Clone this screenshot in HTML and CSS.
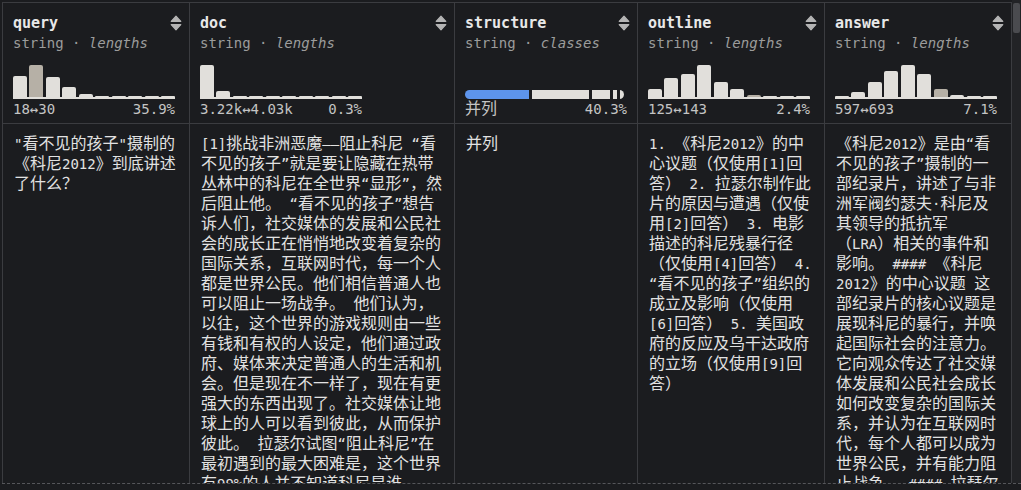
FILE: index.html
```html
<!DOCTYPE html>
<html lang="zh">
<head>
<meta charset="utf-8">
<link rel="stylesheet" href="styles.css">
</head>
<body>
<div class="viewer">
  <div class="main">
    <div class="head-row">
      <div class="hcell">
        <div class="title-row"><span class="title">query</span><svg class="sort" viewBox="0 0 12 16"><path d="M6 1.2 L10.8 6.3 H1.2 Z"/><path d="M6 14.8 L10.8 9.7 H1.2 Z"/></svg></div>
        <div class="sub">string · <em>lengths</em></div>
        <div class="hist">
          <div class="bar" style="height:21px"></div><div class="bar hi" style="height:32px"></div><div class="bar" style="height:20px"></div><div class="bar" style="height:10px"></div><div class="bar" style="height:3px"></div><div class="bar" style="height:1px"></div><div class="bar" style="height:1px"></div><div class="bar" style="height:1px"></div><div class="bar" style="height:1px"></div><div class="bar" style="height:1px"></div>
        </div>
        <div class="stats"><span>18↔30</span><span>35.9%</span></div>
      </div>
      <div class="hcell">
        <div class="title-row"><span class="title">doc</span><svg class="sort" viewBox="0 0 12 16"><path d="M6 1.2 L10.8 6.3 H1.2 Z"/><path d="M6 14.8 L10.8 9.7 H1.2 Z"/></svg></div>
        <div class="sub">string · <em>lengths</em></div>
        <div class="hist">
          <div class="bar" style="height:32px"></div><div class="bar" style="height:6px"></div><div class="bar" style="height:1px"></div><div class="bar" style="height:1px"></div><div class="bar" style="height:1px"></div><div class="bar" style="height:1px"></div><div class="bar" style="height:1px"></div><div class="bar" style="height:1px"></div><div class="bar" style="height:1px"></div><div class="bar" style="height:1px"></div>
        </div>
        <div class="stats"><span>3.22k↔4.03k</span><span>0.3%</span></div>
      </div>
      <div class="hcell">
        <div class="title-row"><span class="title">structure</span><svg class="sort" viewBox="0 0 12 16"><path d="M6 1.2 L10.8 6.3 H1.2 Z"/><path d="M6 14.8 L10.8 9.7 H1.2 Z"/></svg></div>
        <div class="sub">string · <em>classes</em></div>
        <div class="classes">
          <div class="cls">
            <div class="seg blue" style="width:64px"></div><div class="seg" style="width:57px"></div><div class="seg" style="width:18px"></div><div class="seg" style="width:4px"></div><div class="seg" style="width:4px"></div>
          </div>
        </div>
        <div class="stats"><span class="cj">并列</span><span>40.3%</span></div>
      </div>
      <div class="hcell">
        <div class="title-row"><span class="title">outline</span><svg class="sort" viewBox="0 0 12 16"><path d="M6 1.2 L10.8 6.3 H1.2 Z"/><path d="M6 14.8 L10.8 9.7 H1.2 Z"/></svg></div>
        <div class="sub">string · <em>lengths</em></div>
        <div class="hist">
          <div class="bar" style="height:8px"></div><div class="bar" style="height:19px"></div><div class="bar" style="height:23px"></div><div class="bar" style="height:32px"></div><div class="bar" style="height:15px"></div><div class="bar" style="height:8px"></div><div class="bar hi" style="height:2px"></div><div class="bar" style="height:1px"></div><div class="bar" style="height:1px"></div><div class="bar" style="height:1px"></div>
        </div>
        <div class="stats"><span>125↔143</span><span>2.4%</span></div>
      </div>
      <div class="hcell">
        <div class="title-row"><span class="title">answer</span><svg class="sort" viewBox="0 0 12 16"><path d="M6 1.2 L10.8 6.3 H1.2 Z"/><path d="M6 14.8 L10.8 9.7 H1.2 Z"/></svg></div>
        <div class="sub">string · <em>lengths</em></div>
        <div class="hist">
          <div class="bar" style="height:1px"></div><div class="bar" style="height:5px"></div><div class="bar" style="height:15px"></div><div class="bar" style="height:26px"></div><div class="bar" style="height:32px"></div><div class="bar" style="height:23px"></div><div class="bar hi" style="height:8px"></div><div class="bar" style="height:2px"></div><div class="bar" style="height:1px"></div><div class="bar" style="height:1px"></div>
        </div>
        <div class="stats"><span>597↔693</span><span>7.1%</span></div>
      </div>
    </div>
    <div class="body-row">
      <div class="cell"><span class="m">"</span>看不见的孩子<span class="m">"</span>摄制的《科尼<span class="m">2012</span>》到底讲述了什么？</div>
      <div class="cell"><span class="m">[1]</span>挑战非洲恶魔<span class="m">——</span>阻止科尼<span class="m"> “</span>看不见的孩子<span class="m">”</span>就是要让隐藏在热带丛林中的科尼在全世界<span class="m">“</span>显形<span class="m">”</span>，然后阻止他。<span class="m"> “</span>看不见的孩子<span class="m">”</span>想告诉人们，社交媒体的发展和公民社会的成长正在悄悄地改变着复杂的国际关系，互联网时代，每一个人都是世界公民。他们相信普通人也可以阻止一场战争。<span class="m"> </span>他们认为，以往，这个世界的游戏规则由一些有钱和有权的人设定，他们通过政府、媒体来决定普通人的生活和机会。但是现在不一样了，现在有更强大的东西出现了。社交媒体让地球上的人可以看到彼此，从而保护彼此。<span class="m"> </span>拉瑟尔试图<span class="m">“</span>阻止科尼<span class="m">”</span>在最初遇到的最大困难是，这个世界有<span class="m">99%</span>的人并不知道科尼是谁。</div>
      <div class="cell">并列</div>
      <div class="cell"><span class="m">1. </span>《科尼<span class="m">2012</span>》的中心议题（仅使用<span class="m">[1]</span>回答）<span class="m"> 2. </span>拉瑟尔制作此片的原因与遭遇（仅使用<span class="m">[2]</span>回答）<span class="m"> 3. </span>电影描述的科尼残暴行径（仅使用<span class="m">[4]</span>回答）<span class="m"> 4. “</span>看不见的孩子<span class="m">”</span>组织的成立及影响（仅使用<span class="m">[6]</span>回答）<span class="m"> 5. </span>美国政府的反应及乌干达政府的立场（仅使用<span class="m">[9]</span>回答）</div>
      <div class="cell">《科尼<span class="m">2012</span>》是由<span class="m">“</span>看不见的孩子<span class="m">”</span>摄制的一部纪录片，讲述了与非洲军阀约瑟夫<span class="m">·</span>科尼及其领导的抵抗军（<span class="m">LRA</span>）相关的事件和影响。<span class="m"> #### </span>《科尼<span class="m">2012</span>》的中心议题<span class="m"> </span>这部纪录片的核心议题是展现科尼的暴行，并唤起国际社会的注意力。它向观众传达了社交媒体发展和公民社会成长如何改变复杂的国际关系，并认为在互联网时代，每个人都可以成为世界公民，并有能力阻止战争。<span class="m"> #### </span>拉瑟尔的初衷</div>
    </div>
  </div>
  <div class="scrollbar"><div class="thumb"></div></div>
</div>
</body>
</html>
```

FILE: styles.css
```css
html, body {
  margin: 0;
  padding: 0;
}
body {
  width: 1021px;
  height: 490px;
  overflow: hidden;
  background: #1b1c1f;
  font-family: "DejaVu Sans Mono", "Noto Sans CJK SC", monospace;
  color: #e2e2e2;
  text-spacing-trim: space-all;
}
.viewer {
  display: flex;
  margin: 0 0 0 2px;
  height: 483px;
  border-bottom: 1px dashed #55565a;
}
.main {
  flex: none;
  width: 1010px;
  margin-top: 2px;
  border-top: 1px solid #3b3c40;
  border-left: 1px solid #3b3c40;
  display: flex;
  flex-direction: column;
  box-sizing: border-box;
}
.head-row,
.body-row {
  display: grid;
  grid-template-columns: 187px 265px 183px 187px 187px;
}
.head-row {
  height: 121px;
  border-bottom: 1px solid #3b3c40;
  box-sizing: border-box;
}
.body-row {
  flex: 1;
  min-height: 0;
  overflow: hidden;
}
.hcell {
  border-right: 1px solid #3b3c40;
  padding: 10px 7px 0 10px;
  font-size: 14px;
  line-height: 20px;
  overflow: hidden;
}
.title-row {
  display: flex;
  justify-content: space-between;
  align-items: center;
  height: 20px;
}
.title {
  font-weight: bold;
  font-size: 15px;
  color: #e8e8e8;
}
.sort {
  width: 12px;
  height: 16px;
  fill: #b4b4b4;
  stroke: #b4b4b4;
  stroke-width: 1.2;
  stroke-linejoin: round;
}
.sub {
  color: #9c9c9c;
  white-space: nowrap;
}
.sub em {
  font-style: italic;
}
.hist {
  margin-top: 12px;
  width: 162px;
  height: 32px;
  display: flex;
  align-items: flex-end;
  gap: 2.4px;
  border-bottom: 2px solid #e1dfdb;
}
.bar {
  flex: 1;
  background: #e1dfdb;
  border-radius: 2px 2px 0 0;
}
.bar.hi {
  background: #b6b0a6;
}
.classes {
  margin-top: 12px;
  width: 162px;
  height: 34px;
  display: flex;
  align-items: flex-end;
}
.cls {
  display: flex;
  gap: 3px;
  height: 9px;
  border-radius: 5px;
  overflow: hidden;
}
.seg {
  background: #e1dfdb;
}
.seg.blue {
  background: #5d94ec;
}
.stats {
  width: 162px;
  display: flex;
  justify-content: space-between;
  color: #c4c4c4;
  white-space: nowrap;
}
.cj {
  font-size: 16px;
}
.cell {
  border-right: 1px solid #3b3c40;
  padding: 10px 11px 0 11px;
  font-size: 16px;
  line-height: 20px;
  color: #e2e2e2;
  overflow: hidden;
}
.m {
  font-size: 14px;
}
.scrollbar {
  flex: none;
  width: 9px;
  background: #222326;
  padding-top: 3px;
  box-sizing: border-box;
}
.thumb {
  width: 7px;
  height: 30px;
  margin-left: 1px;
  background: #4a4b4f;
  border-radius: 2px;
}
```
